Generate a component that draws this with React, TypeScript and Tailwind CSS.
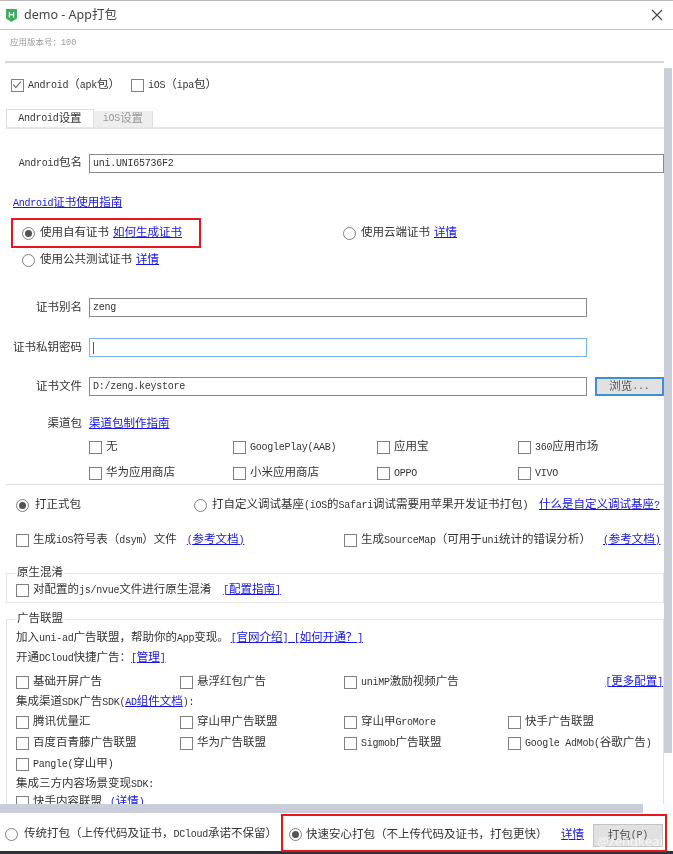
import React from "react";

const M = ({ s }: { s: string }) => (
  <>
    {s.split(/([\x21-\x7e][\x20-\x7e]*)/).map((p, i) =>
      /[\x21-\x7e]/.test(p) ? (
        <span key={i} className="text-[10px] tracking-[-0.25px]">
          {p}
        </span>
      ) : (
        <React.Fragment key={i}>{p}</React.Fragment>
      )
    )}
  </>
);

const Box = ({ checked = false }: { checked?: boolean }) => (
  <span className="relative shrink-0 w-[13px] h-[13px] border border-[#808080] bg-white block">
    {checked && (
      <svg viewBox="0 0 13 13" className="absolute left-0 top-0 w-[11px] h-[11px]">
        <path d="M1.5 5.5 L4.5 9 L10.5 2" fill="none" stroke="#666" strokeWidth="1.2" />
      </svg>
    )}
  </span>
);

const Radio = ({ on = false }: { on?: boolean }) => (
  <span className="shrink-0 w-[13px] h-[13px] rounded-full border-[1.5px] border-[#808080] bg-white flex items-center justify-center">
    {on && <span className="w-[7px] h-[7px] rounded-full bg-[#555] block" />}
  </span>
);

const Check = ({ label, className = "", checked = false }: { label: string; className?: string; checked?: boolean }) => (
  <div className={`flex items-center gap-[4px] whitespace-nowrap ${className}`}>
    <Box checked={checked} />
    <span>
      <M s={label} />
    </span>
  </div>
);

const A = ({ s, className = "" }: { s: string; className?: string }) => (
  <span className={`text-[#1414e6] underline whitespace-nowrap ${className}`}>
    <M s={s} />
  </span>
);

const Field = ({
  label,
  value,
  focus = false,
  wide = false,
  children,
  className = "",
}: {
  label: string;
  value?: string;
  focus?: boolean;
  wide?: boolean;
  children?: React.ReactNode;
  className?: string;
}) => (
  <div className={`flex items-center h-[19px] ${className}`}>
    <span className="w-[76px] text-right mr-[7px] whitespace-nowrap shrink-0">
      <M s={label} />
    </span>
    <div
      className={`h-[19px] flex items-center px-[3px] bg-white border ${wide ? "w-[575px]" : "w-[498px]"} ${
        focus ? "border-[#7ab4e6]" : "border-[#8a8a8a]"
      }`}
    >
      {value && <M s={value} />}
      {focus && <span className="w-px h-[12px] bg-[#555] block" />}
    </div>
    {children}
  </div>
);

export default function App() {
  return (
    <div
      className="relative w-[673px] h-[854px] overflow-hidden bg-white flex flex-col text-[11.5px] leading-[14px] text-[#333] blur-[0.4px] [text-spacing-trim:space-all]"
      style={{ fontFamily: '"Liberation Mono", "Noto Sans CJK SC", monospace' }}
    >
      {/* title bar */}
      <div className="h-[30px] shrink-0 border-t border-b border-t-[#bbb] border-b-[#c4c4c4] flex items-center pl-[6px] pr-[10px]">
        <svg viewBox="0 0 11 13" className="w-[11px] h-[13px] mr-[7px]">
          <path d="M0 0H11V9.5L5.5 13L0 9.5Z" fill="#3fae5a" />
          <path d="M3.4 3V8.5M7.6 3V8.5M3.4 5.7H7.6" stroke="#fff" strokeWidth="1.2" fill="none" />
        </svg>
        <span className="text-[12.5px] text-[#444]" style={{ fontFamily: '"Noto Sans", "Noto Sans CJK SC", sans-serif' }}>
          demo - App打包
        </span>
        <svg viewBox="0 0 12 12" className="ml-auto w-[12px] h-[12px]">
          <path d="M1 1L11 11M11 1L1 11" stroke="#444" strokeWidth="1.1" />
        </svg>
      </div>

      {/* version */}
      <div className="h-[33px] shrink-0 ml-[5px] w-[659px] border-b-2 border-[#d8d8d8] pt-[6px] pl-[5px] text-[8.5px] text-[#999]">
        应用版本号：100
      </div>

      {/* scroll body */}
      <div className="h-[741px] shrink-0 flex overflow-hidden">
        <div className="w-[664px] shrink-0 overflow-hidden">
          <div className="flex items-center h-[22px] mt-[11px] ml-[11px]">
            <Check label="Android（apk包）" checked />
            <Check label="iOS（ipa包）" className="ml-[11px]" />
          </div>

          {/* tabs */}
          <div className="flex items-end h-[18px] mt-[13px] ml-[6px] relative">
            <div className="w-[88px] h-[18px] border border-b-0 border-[#ddd] flex items-center justify-center bg-white">
              <M s="Android设置" />
            </div>
            <div className="w-[59px] h-[16px] bg-[#eee] border-r border-[#ddd] text-[#999] flex items-center justify-center">
              <M s="iOS设置" />
            </div>
          </div>

          {/* tab panel */}
          <div className="ml-[6px] h-[358px] border-t-2 border-b border-[#e6e6e6] border-b-[#ddd] overflow-hidden">
            <Field label="Android包名" value="uni.UNI65736F2" wide className="mt-[25px]" />
            <div className="mt-[23px] ml-[7px] h-[14px]">
              <A s="Android证书使用指南" />
            </div>
            <div className="flex items-center h-[16px] mt-[15px] ml-[16px]">
              <div className="flex items-center w-[321px]">
                <Radio on />
                <span className="ml-[5px] whitespace-nowrap">使用自有证书</span>
                <A s="如何生成证书" className="ml-[4px]" />
              </div>
              <Radio />
              <span className="ml-[5px] whitespace-nowrap">使用云端证书</span>
              <A s="详情" className="ml-[4px]" />
            </div>
            <div className="flex items-center h-[16px] mt-[11px] ml-[16px]">
              <Radio />
              <span className="ml-[5px] whitespace-nowrap">使用公共测试证书</span>
              <A s="详情" className="ml-[4px]" />
            </div>
            <Field label="证书别名" value="zeng" className="mt-[30px]" />
            <Field label="证书私钥密码" focus className="mt-[21px]" />
            <Field label="证书文件" value="D:/zeng.keystore" className="mt-[20px]">
              <div className="ml-[8px] w-[69px] h-[19px] shrink-0 bg-[#e1e1e1] border-2 border-[#3f8fd6] flex items-center justify-center text-[#555]">
                <M s="浏览..." />
              </div>
            </Field>
            <div className="flex items-center h-[14px] mt-[21px]">
              <span className="w-[76px] text-right mr-[7px] shrink-0">渠道包</span>
              <A s="渠道包制作指南" />
            </div>
            <div className="grid grid-cols-[144px_144px_141px_140px] ml-[83px] mt-[8px] h-[16px] items-center">
              <Check label="无" />
              <Check label="GooglePlay(AAB)" />
              <Check label="应用宝" />
              <Check label="360应用市场" />
            </div>
            <div className="grid grid-cols-[144px_144px_141px_140px] ml-[83px] mt-[10px] h-[16px] items-center">
              <Check label="华为应用商店" />
              <Check label="小米应用商店" />
              <Check label="OPPO" />
              <Check label="VIVO" />
            </div>
          </div>

          {/* build type */}
          <div className="flex items-center h-[16px] mt-[12px] ml-[16px]">
            <Radio on />
            <span className="ml-[6px] w-[159px] whitespace-nowrap">打正式包</span>
            <Radio />
            <span className="ml-[5px] w-[327px] whitespace-nowrap">
              <M s="打自定义调试基座(iOS的Safari调试需要用苹果开发证书打包)" />
            </span>
            <A s="什么是自定义调试基座?" />
          </div>
          <div className="flex items-center h-[16px] mt-[19px] ml-[16px]">
            <Box />
            <span className="ml-[4px] w-[311px] whitespace-nowrap flex">
              <span>
                <M s="生成iOS符号表（dsym）文件" />
              </span>
              <A s="(参考文档)" className="ml-[10px]" />
            </span>
            <Box />
            <span className="ml-[4px] w-[242px] whitespace-nowrap">
              <M s="生成SourceMap（可用于uni统计的错误分析）" />
            </span>
            <A s="(参考文档)" />
          </div>

          {/* fieldset 1 */}
          <div className="relative ml-[6px] mt-[25px] h-[30px] border border-[#e4e4e4] pl-[9px] pt-[4px]">
            <span className="absolute left-[8px] -top-[8px] bg-white px-[2px]">原生混淆</span>
            <div className="flex items-center h-[16px] mt-[4px]">
              <Box />
              <span className="ml-[4px] whitespace-nowrap">
                <M s="对配置的js/nvue文件进行原生混淆" />
              </span>
              <A s="[配置指南]" className="ml-[12px]" />
            </div>
          </div>

          {/* fieldset 2 */}
          <div className="relative ml-[6px] mt-[16px] h-[200px] border border-b-0 border-[#e4e4e4] pl-[9px]">
            <span className="absolute left-[8px] -top-[8px] bg-white px-[2px]">广告联盟</span>
            <div className="h-[14px] mt-[11px] whitespace-nowrap">
              <M s="加入uni-ad广告联盟，帮助你的App变现。" />
              <A s="[官网介绍] [如何开通？]" className="ml-[2px]" />
            </div>
            <div className="h-[14px] mt-[6px] whitespace-nowrap">
              <M s="开通DCloud快捷广告：" />
              <A s="[管理]" />
            </div>
            <div className="grid grid-cols-[164px_164px_1fr] h-[16px] mt-[9px] items-center">
              <Check label="基础开屏广告" />
              <Check label="悬浮红包广告" />
              <div className="flex items-center justify-between">
                <Check label="uniMP激励视频广告" />
                <A s="[更多配置]" />
              </div>
            </div>
            <div className="h-[14px] mt-[5px] whitespace-nowrap">
              <M s="集成渠道SDK广告SDK(" />
              <A s="AD组件文档" />
              <M s="):" />
            </div>
            <div className="grid grid-cols-[164px_164px_164px_1fr] h-[16px] mt-[5px] items-center">
              <Check label="腾讯优量汇" />
              <Check label="穿山甲广告联盟" />
              <Check label="穿山甲GroMore" />
              <Check label="快手广告联盟" />
            </div>
            <div className="grid grid-cols-[164px_164px_164px_1fr] h-[16px] mt-[5px] items-center">
              <Check label="百度百青藤广告联盟" />
              <Check label="华为广告联盟" />
              <Check label="Sigmob广告联盟" />
              <Check label="Google AdMob(谷歌广告)" />
            </div>
            <Check label="Pangle(穿山甲)" className="h-[16px] mt-[5px]" />
            <div className="h-[14px] mt-[5px] whitespace-nowrap">
              <M s="集成三方内容场景变现SDK:" />
            </div>
            <div className="flex items-center h-[16px] mt-[3px]">
              <Box />
              <span className="ml-[4px] whitespace-nowrap">快手内容联盟</span>
              <A s="(详情)" className="ml-[8px]" />
            </div>
          </div>
        </div>

        {/* vertical scrollbar */}
        <div className="w-[9px] shrink-0 pt-[5px]">
          <div className="w-[8px] h-[685px] bg-[#c9ced8]" />
        </div>
      </div>

      {/* horizontal scrollbar */}
      <div className="h-[9px] shrink-0 bg-white">
        <div className="w-[643px] h-[9px] bg-[#c9ced8]" />
      </div>

      {/* footer */}
      <div className="h-[38px] shrink-0 flex items-center pl-[5px] pt-[5px]">
        <Radio />
        <span className="ml-[6px] w-[265px] whitespace-nowrap">
          <M s="传统打包（上传代码及证书，DCloud承诺不保留）" />
        </span>
        <Radio on />
        <span className="ml-[4px] w-[255px] whitespace-nowrap">快速安心打包（不上传代码及证书，打包更快）</span>
        <A s="详情" />
        <div className="ml-[9px] mt-[2px] w-[70px] h-[23px] bg-[#e1e1e1] border border-[#c4c4c4] flex items-center justify-center text-[#555]">
          <M s="打包(P)" />
        </div>
      </div>
      <div className="h-[3px] shrink-0 bg-[#2d3138]" />

      {/* annotations */}
      <div className="absolute left-[11px] top-[218px] w-[190px] h-[30px] border-2 border-[#e8141e]" />
      <div className="absolute left-[281px] top-[814px] w-[386px] h-[38px] border-2 border-[#e8141e]" />
      <span className="absolute right-[10px] bottom-[6px] text-[13px] text-white/70 whitespace-nowrap" style={{ fontFamily: '"Noto Sans", sans-serif' }}>
        CSDN @zengkeai
      </span>
    </div>
  );
}
